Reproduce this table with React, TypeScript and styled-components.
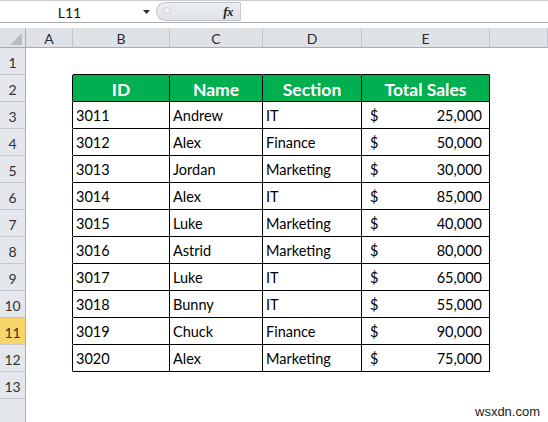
import React from "react";
import styled, { createGlobalStyle } from "styled-components";

const GlobalStyle = createGlobalStyle`
  html, body { margin: 0; padding: 0; background: #ffffff; overflow: hidden; }
  * { box-sizing: border-box; }
`;

const Page = styled.div`
  position: relative;
  width: 548px;
  height: 422px;
  display: flex;
  flex-direction: column;
  background: #ffffff;
  font-family: Lato, "Open Sans", sans-serif;
  overflow: hidden;
`;

const FormulaBar = styled.div`
  display: flex;
  height: 23px;
  border-top: 1px solid #c9ccd1;
  border-bottom: 1px solid #a9adb3;
  background: #ffffff;
`;

const NameBox = styled.div`
  width: 156px;
  display: flex;
  align-items: center;
`;

const NameText = styled.div`
  width: 139px;
  text-align: center;
  font-size: 14px;
  color: #111;
  padding-top: 1px;
`;

const Arrow = styled.svg`
  width: 7px;
  height: 4px;
  margin-left: 4px;
`;

const FxPill = styled.div`
  width: 85px;
  margin: 1px 0 1px;
  display: flex;
  align-items: center;
  justify-content: space-between;
  padding: 0 7px 0 6px;
  border: 1px solid #bfc3c9;
  border-right: 1px solid #c8ccd2;
  border-radius: 11px 0 0 11px;
  background: linear-gradient(#eceef1, #dfe2e6);
`;

const Knob = styled.div`
  width: 8px;
  height: 7px;
  border-radius: 50%;
  background: radial-gradient(circle at 50% 40%, #ffffff, #d9dce0);
  border: 1px solid #d3d6da;
  margin-top: -3px;
`;

const Fx = styled.span`
  font-family: "Liberation Serif", serif;
  font-style: italic;
  font-weight: bold;
  font-size: 13px;
  color: #222;
  letter-spacing: -0.5px;
`;

const FormulaInput = styled.div`
  flex: 1;
  background: #ffffff;
`;

const Gap = styled.div`
  height: 5px;
  background: #ffffff;
`;

const Sheet = styled.div`
  flex: 1;
  display: grid;
  grid-template-columns: 26px 47px 97px 93px 99px 128px 1fr;
  grid-template-rows: 20px repeat(13, 27px) 1fr;
`;

const Corner = styled.div`
  background: #dfe3e8;
  border-right: 1px solid #a9aeb5;
  border-bottom: 1px solid #a9aeb5;
  display: flex;
  align-items: flex-end;
  justify-content: flex-end;
  padding: 0 3px 2px 0;
`;

const ColHeader = styled.div`
  background: #dfe3e8;
  border-right: 1px solid #c2c6cc;
  border-bottom: 1px solid #a9aeb5;
  display: flex;
  align-items: center;
  justify-content: center;
  font-size: 14px;
  color: #2b2b2b;
  padding-top: 1px;
`;

const RowHeader = styled.div<{ $selected?: boolean; $last?: boolean }>`
  background: ${(p) => (p.$selected ? "#f9d468" : "#e4e7ec")};
  border-right: 1px solid #a9aeb5;
  border-bottom: ${(p) => (p.$last ? "none" : "1px solid #c3c7cd")};
  display: flex;
  align-items: flex-end;
  justify-content: center;
  font-size: 14px;
  line-height: 16px;
  color: #333;
  padding-bottom: 3px;
`;

const Cell = styled.div<{
  $right?: boolean;
  $bottom?: boolean;
  $header?: boolean;
  $span?: number;
}>`
  background: ${(p) => (p.$header ? "#00b050" : "#ffffff")};
  border-right: 1px solid ${(p) => (p.$right ? "#000" : "#fff")};
  border-bottom: 1px solid ${(p) => (p.$bottom ? "#000" : "#fff")};
  ${(p) => (p.$span ? `grid-column: span ${p.$span};` : "")}
  display: flex;
  align-items: center;
  justify-content: ${(p) => (p.$header ? "center" : "flex-start")};
  padding: ${(p) => (p.$header ? "2px 0 0" : "1px 3px 0")};
  font-size: ${(p) => (p.$header ? "17.5px" : "14.5px")};
  font-weight: ${(p) => (p.$header ? 700 : 400)};
  color: ${(p) => (p.$header ? "#ffffff" : "#000")};
  white-space: nowrap;
  overflow: hidden;
`;

const Money = styled.div`
  flex: 1;
  display: flex;
  justify-content: space-between;
  padding: 0 4px 0 5px;
`;

const Watermark = styled.div`
  position: absolute;
  left: 475px;
  bottom: 3px;
  font-family: "Liberation Sans", Arial, sans-serif;
  font-size: 13px;
  color: #1a1a1a;
`;

const columns = ["A", "B", "C", "D", "E", ""];

type Row = { id: string; name: string; section: string; sales: string };

const rows: Row[] = [
  { id: "3011", name: "Andrew", section: "IT", sales: "25,000" },
  { id: "3012", name: "Alex", section: "Finance", sales: "50,000" },
  { id: "3013", name: "Jordan", section: "Marketing", sales: "30,000" },
  { id: "3014", name: "Alex", section: "IT", sales: "85,000" },
  { id: "3015", name: "Luke", section: "Marketing", sales: "40,000" },
  { id: "3016", name: "Astrid", section: "Marketing", sales: "80,000" },
  { id: "3017", name: "Luke", section: "IT", sales: "65,000" },
  { id: "3018", name: "Bunny", section: "IT", sales: "55,000" },
  { id: "3019", name: "Chuck", section: "Finance", sales: "90,000" },
  { id: "3020", name: "Alex", section: "Marketing", sales: "75,000" },
];

export default function App() {
  const sheetRows: React.ReactNode[] = [];

  sheetRows.push(
    <React.Fragment key="r1">
      <RowHeader>1</RowHeader>
      <Cell />
      <Cell $bottom />
      <Cell $bottom />
      <Cell $bottom />
      <Cell $bottom />
      <Cell />
    </React.Fragment>
  );

  sheetRows.push(
    <React.Fragment key="r2">
      <RowHeader>2</RowHeader>
      <Cell $right />
      <Cell $header $right $bottom>ID</Cell>
      <Cell $header $right $bottom>Name</Cell>
      <Cell $header $right $bottom>Section</Cell>
      <Cell $header $right $bottom>Total Sales</Cell>
      <Cell />
    </React.Fragment>
  );

  rows.forEach((r, i) => {
    const n = i + 3;
    sheetRows.push(
      <React.Fragment key={r.id}>
        <RowHeader $selected={n === 11}>{n}</RowHeader>
        <Cell $right />
        <Cell $right $bottom>{r.id}</Cell>
        <Cell $right $bottom>{r.name}</Cell>
        <Cell $right $bottom>{r.section}</Cell>
        <Cell $right $bottom>
          <Money>
            <span>$</span>
            <span>{r.sales}</span>
          </Money>
        </Cell>
        <Cell />
      </React.Fragment>
    );
  });

  sheetRows.push(
    <React.Fragment key="r13">
      <RowHeader>13</RowHeader>
      <Cell $span={6} />
    </React.Fragment>
  );

  return (
    <>
      <GlobalStyle />
      <Page>
        <FormulaBar>
          <NameBox>
            <NameText>L11</NameText>
            <Arrow viewBox="0 0 7 4">
              <path d="M0 0 H7 L3.5 4 Z" fill="#333" />
            </Arrow>
          </NameBox>
          <FxPill>
            <Knob />
            <Fx>fx</Fx>
          </FxPill>
          <FormulaInput />
        </FormulaBar>
        <Gap />
        <Sheet>
          <Corner>
            <svg width="12" height="12" viewBox="0 0 12 12">
              <path d="M12 0 V12 H0 Z" fill="#b9bec5" />
            </svg>
          </Corner>
          {columns.map((c, i) => (
            <ColHeader key={i}>{c}</ColHeader>
          ))}
          {sheetRows}
          <RowHeader $last />
          <Cell $span={6} />
        </Sheet>
        <Watermark>wsxdn.com</Watermark>
      </Page>
    </>
  );
}
